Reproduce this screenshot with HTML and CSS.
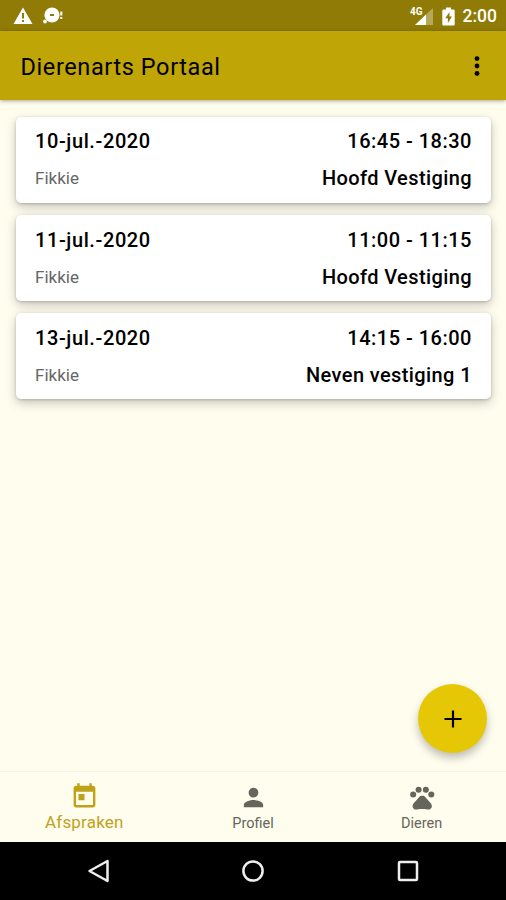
FILE: index.html
```html
<!DOCTYPE html>
<html lang="nl">
  <head>
    <meta charset="UTF-8" />
    <meta name="viewport" content="width=device-width, initial-scale=1.0" />
    <title>Dierenarts Portaal</title>
    <link rel="stylesheet" href="styles.css">
  </head>
  <body>
    <div class="status-bar">
      <div class="status-left">
        <svg width="20" height="18" viewBox="0 0 20 18">
          <path fill="#fff" fill-rule="evenodd" d="M10 0.5L19.5 17H0.5zM9 6v5.5h2V6zM9 13v2h2v-2z" />
        </svg>
        <svg width="20" height="18" viewBox="0 0 20 18">
          <circle cx="9" cy="8" r="7.6" fill="#fff" />
          <circle cx="2" cy="14.5" r="1.9" fill="#fff" />
          <path fill="#fff" d="M17.3 4.5h2v4h-2zM17.3 10h2v2h-2z" />
          <path fill="#8f7b05" d="M7 7h4v2H7z" />
        </svg>
      </div>
      <div class="status-right">
        <span class="network">4G</span>
        <svg class="signal" width="18" height="17" viewBox="0 0 18 17">
          <path fill="#b5a75b" d="M18 0v17H0z" />
          <path fill="#fff" d="M11 6.6V17H0z" />
        </svg>
        <svg class="battery" width="13" height="19" viewBox="0 0 13 19">
          <path fill="#fff" d="M4 0.5h5v2h2.5q1.2 0 1.2 1.2v13.6q0 1.2-1.2 1.2h-10q-1.2 0-1.2-1.2V3.7q0-1.2 1.2-1.2H4z" />
          <path fill="#8f7b05" d="M7.5 5L3.2 11.3h2.7V16L10 9.6H7.5z" />
        </svg>
        <span class="clock">2:00</span>
      </div>
    </div>

    <header class="app-bar">
      <h1>Dierenarts Portaal</h1>
      <svg width="6" height="20" viewBox="0 0 6 20">
        <circle cx="3" cy="2.6" r="2.4" />
        <circle cx="3" cy="10" r="2.4" />
        <circle cx="3" cy="17.4" r="2.4" />
      </svg>
    </header>

    <main class="content">
      <div class="card">
        <div class="row"><span class="date">10-jul.-2020</span><span class="time">16:45 - 18:30</span></div>
        <div class="row"><span class="pet">Fikkie</span><span>Hoofd Vestiging</span></div>
      </div>
      <div class="card">
        <div class="row"><span class="date">11-jul.-2020</span><span class="time">11:00 - 11:15</span></div>
        <div class="row"><span class="pet">Fikkie</span><span>Hoofd Vestiging</span></div>
      </div>
      <div class="card">
        <div class="row"><span class="date">13-jul.-2020</span><span class="time">14:15 - 16:00</span></div>
        <div class="row"><span class="pet">Fikkie</span><span>Neven vestiging 1</span></div>
      </div>
      <button class="fab" aria-label="Toevoegen">
        <svg width="18" height="18" viewBox="0 0 18 18">
          <path stroke="#000" stroke-width="2.2" d="M9 0.5v17M0.5 9h17" />
        </svg>
      </button>
    </main>

    <nav class="tabs">
      <a class="tab active">
        <svg width="29" height="29" viewBox="0 0 24 24">
          <path fill="currentColor" d="M19 3h-1V1h-2v2H8V1H6v2H5c-1.1 0-2 .9-2 2v14c0 1.1.9 2 2 2h14c1.1 0 2-.9 2-2V5c0-1.1-.9-2-2-2zm0 16H5V8h14v11zM7 10h5v5H7z" />
        </svg>
        <span>Afspraken</span>
      </a>
      <a class="tab">
        <svg width="29" height="29" viewBox="0 0 24 24">
          <path fill="currentColor" d="M12 12c2.21 0 4-1.79 4-4s-1.79-4-4-4-4 1.79-4 4 1.79 4 4 4zm0 2c-2.67 0-8 1.34-8 4v2h16v-2c0-2.66-5.33-4-8-4z" />
        </svg>
        <span>Profiel</span>
      </a>
      <a class="tab">
        <svg width="29" height="29" viewBox="-0.6 0 24 24">
          <g fill="currentColor">
            <circle cx="4.5" cy="9.5" r="2.5" />
            <circle cx="9" cy="5.5" r="2.5" />
            <circle cx="15" cy="5.5" r="2.5" />
            <circle cx="19.5" cy="9.5" r="2.5" />
            <path d="M17.34 14.86c-.87-1.02-1.6-1.89-2.48-2.91-.46-.54-1.05-1.08-1.75-1.32-.11-.04-.22-.07-.33-.09-.25-.04-.52-.04-.78-.04s-.53 0-.79.05c-.11.02-.22.05-.33.09-.7.24-1.28.78-1.75 1.32-.87 1.02-1.6 1.89-2.48 2.91-1.31 1.31-2.92 2.76-2.62 4.79.29 1.02 1.02 2.03 2.33 2.32.73.15 3.06-.44 5.54-.44h.18c2.48 0 4.81.58 5.54.44 1.31-.29 2.04-1.31 2.33-2.32.31-2.04-1.3-3.49-2.61-4.8z" />
          </g>
        </svg>
        <span>Dieren</span>
      </a>
    </nav>

    <div class="system-nav">
      <svg width="24" height="24" viewBox="0 0 24 24">
        <path d="M20.5 2L2.5 12l18 10z" />
      </svg>
      <svg width="24" height="24" viewBox="0 0 24 24">
        <circle cx="12" cy="12" r="9.6" />
      </svg>
      <svg width="24" height="24" viewBox="0 0 24 24">
        <rect x="3" y="3" width="18" height="18" rx="1" />
      </svg>
    </div>
  </body>
</html>
```
FILE: styles.css
```css
* {
  box-sizing: border-box;
}

body {
  margin: 0;
  height: 900px;
  display: flex;
  flex-direction: column;
  background-color: #fffdee;
  color: #000;
  font-family: Roboto, sans-serif;
  overflow: hidden;
}

svg {
  display: block;
}

.status-bar {
  height: 31px;
  display: flex;
  justify-content: space-between;
  align-items: center;
  padding: 1px 9px 0 13px;
  background-color: #8f7b05;
  color: #fff;
}

.status-left,
.status-right {
  display: flex;
  align-items: center;
}

.status-left {
  gap: 10px;
}

.network {
  align-self: flex-start;
  font-size: 10px;
  font-weight: 700;
  line-height: 10px;
  margin: 1px -8px 0 0;
  z-index: 1;
}

.battery {
  margin: 0 8px 0 9px;
}

.clock {
  font-size: 17.5px;
  font-weight: 500;
  line-height: 20px;
}

.app-bar {
  height: 69px;
  display: flex;
  justify-content: space-between;
  align-items: center;
  padding: 0 26px 0 20.5px;
  background-color: #bfa506;
  box-shadow: 0 1px 4px rgba(0, 0, 0, 0.35);
}

.app-bar h1 {
  margin: 3px 0 0;
  font-size: 23.5px;
  font-weight: 400;
  letter-spacing: 0.6px;
}

.content {
  flex: 1;
  position: relative;
  display: flex;
  flex-direction: column;
  gap: 12px;
  padding: 17px 15px 0 16px;
}

.card {
  height: 86.15px;
  padding: 5.4px 19px 0;
  background-color: #fff;
  border-radius: 5px;
  box-shadow: 0 4px 11px rgba(0, 0, 0, 0.22), 0 1px 3px rgba(0, 0, 0, 0.18);
}

.card + .card {
  padding-top: 6.2px;
}

.row {
  height: 37px;
  display: flex;
  justify-content: space-between;
  align-items: center;
  font-size: 20px;
  font-weight: 500;
  letter-spacing: 0.4px;
}

.date {
  letter-spacing: 0.6px;
}

.time {
  letter-spacing: 0.5px;
}

.pet {
  font-size: 17px;
  font-weight: 400;
  letter-spacing: 0;
  color: #666;
}

.fab {
  position: absolute;
  right: 19px;
  bottom: 18px;
  width: 69px;
  height: 69px;
  display: flex;
  justify-content: center;
  align-items: center;
  padding: 0;
  border: none;
  border-radius: 50%;
  background-color: #e6c706;
  box-shadow: 0 5px 9px rgba(0, 0, 0, 0.25);
}

.tabs {
  height: 71px;
  display: flex;
  border-top: 1px solid #f5f3e4;
}

.tab {
  flex: 1;
  display: flex;
  flex-direction: column;
  align-items: center;
  padding-top: 11px;
  color: #66655b;
  font-size: 14.5px;
  line-height: 20px;
}

.tab span {
  margin-top: 2px;
}

.tab.active {
  padding-top: 10px;
  color: #bfa21a;
  font-size: 17px;
}

.tab.active span {
  margin-top: 1px;
  letter-spacing: 0.2px;
}

.system-nav {
  height: 58px;
  display: flex;
  justify-content: center;
  align-items: center;
  gap: 130.5px;
  background-color: #000;
}

.system-nav svg {
  fill: none;
  stroke: #eee;
  stroke-width: 2.5;
  stroke-linejoin: round;
}
```
